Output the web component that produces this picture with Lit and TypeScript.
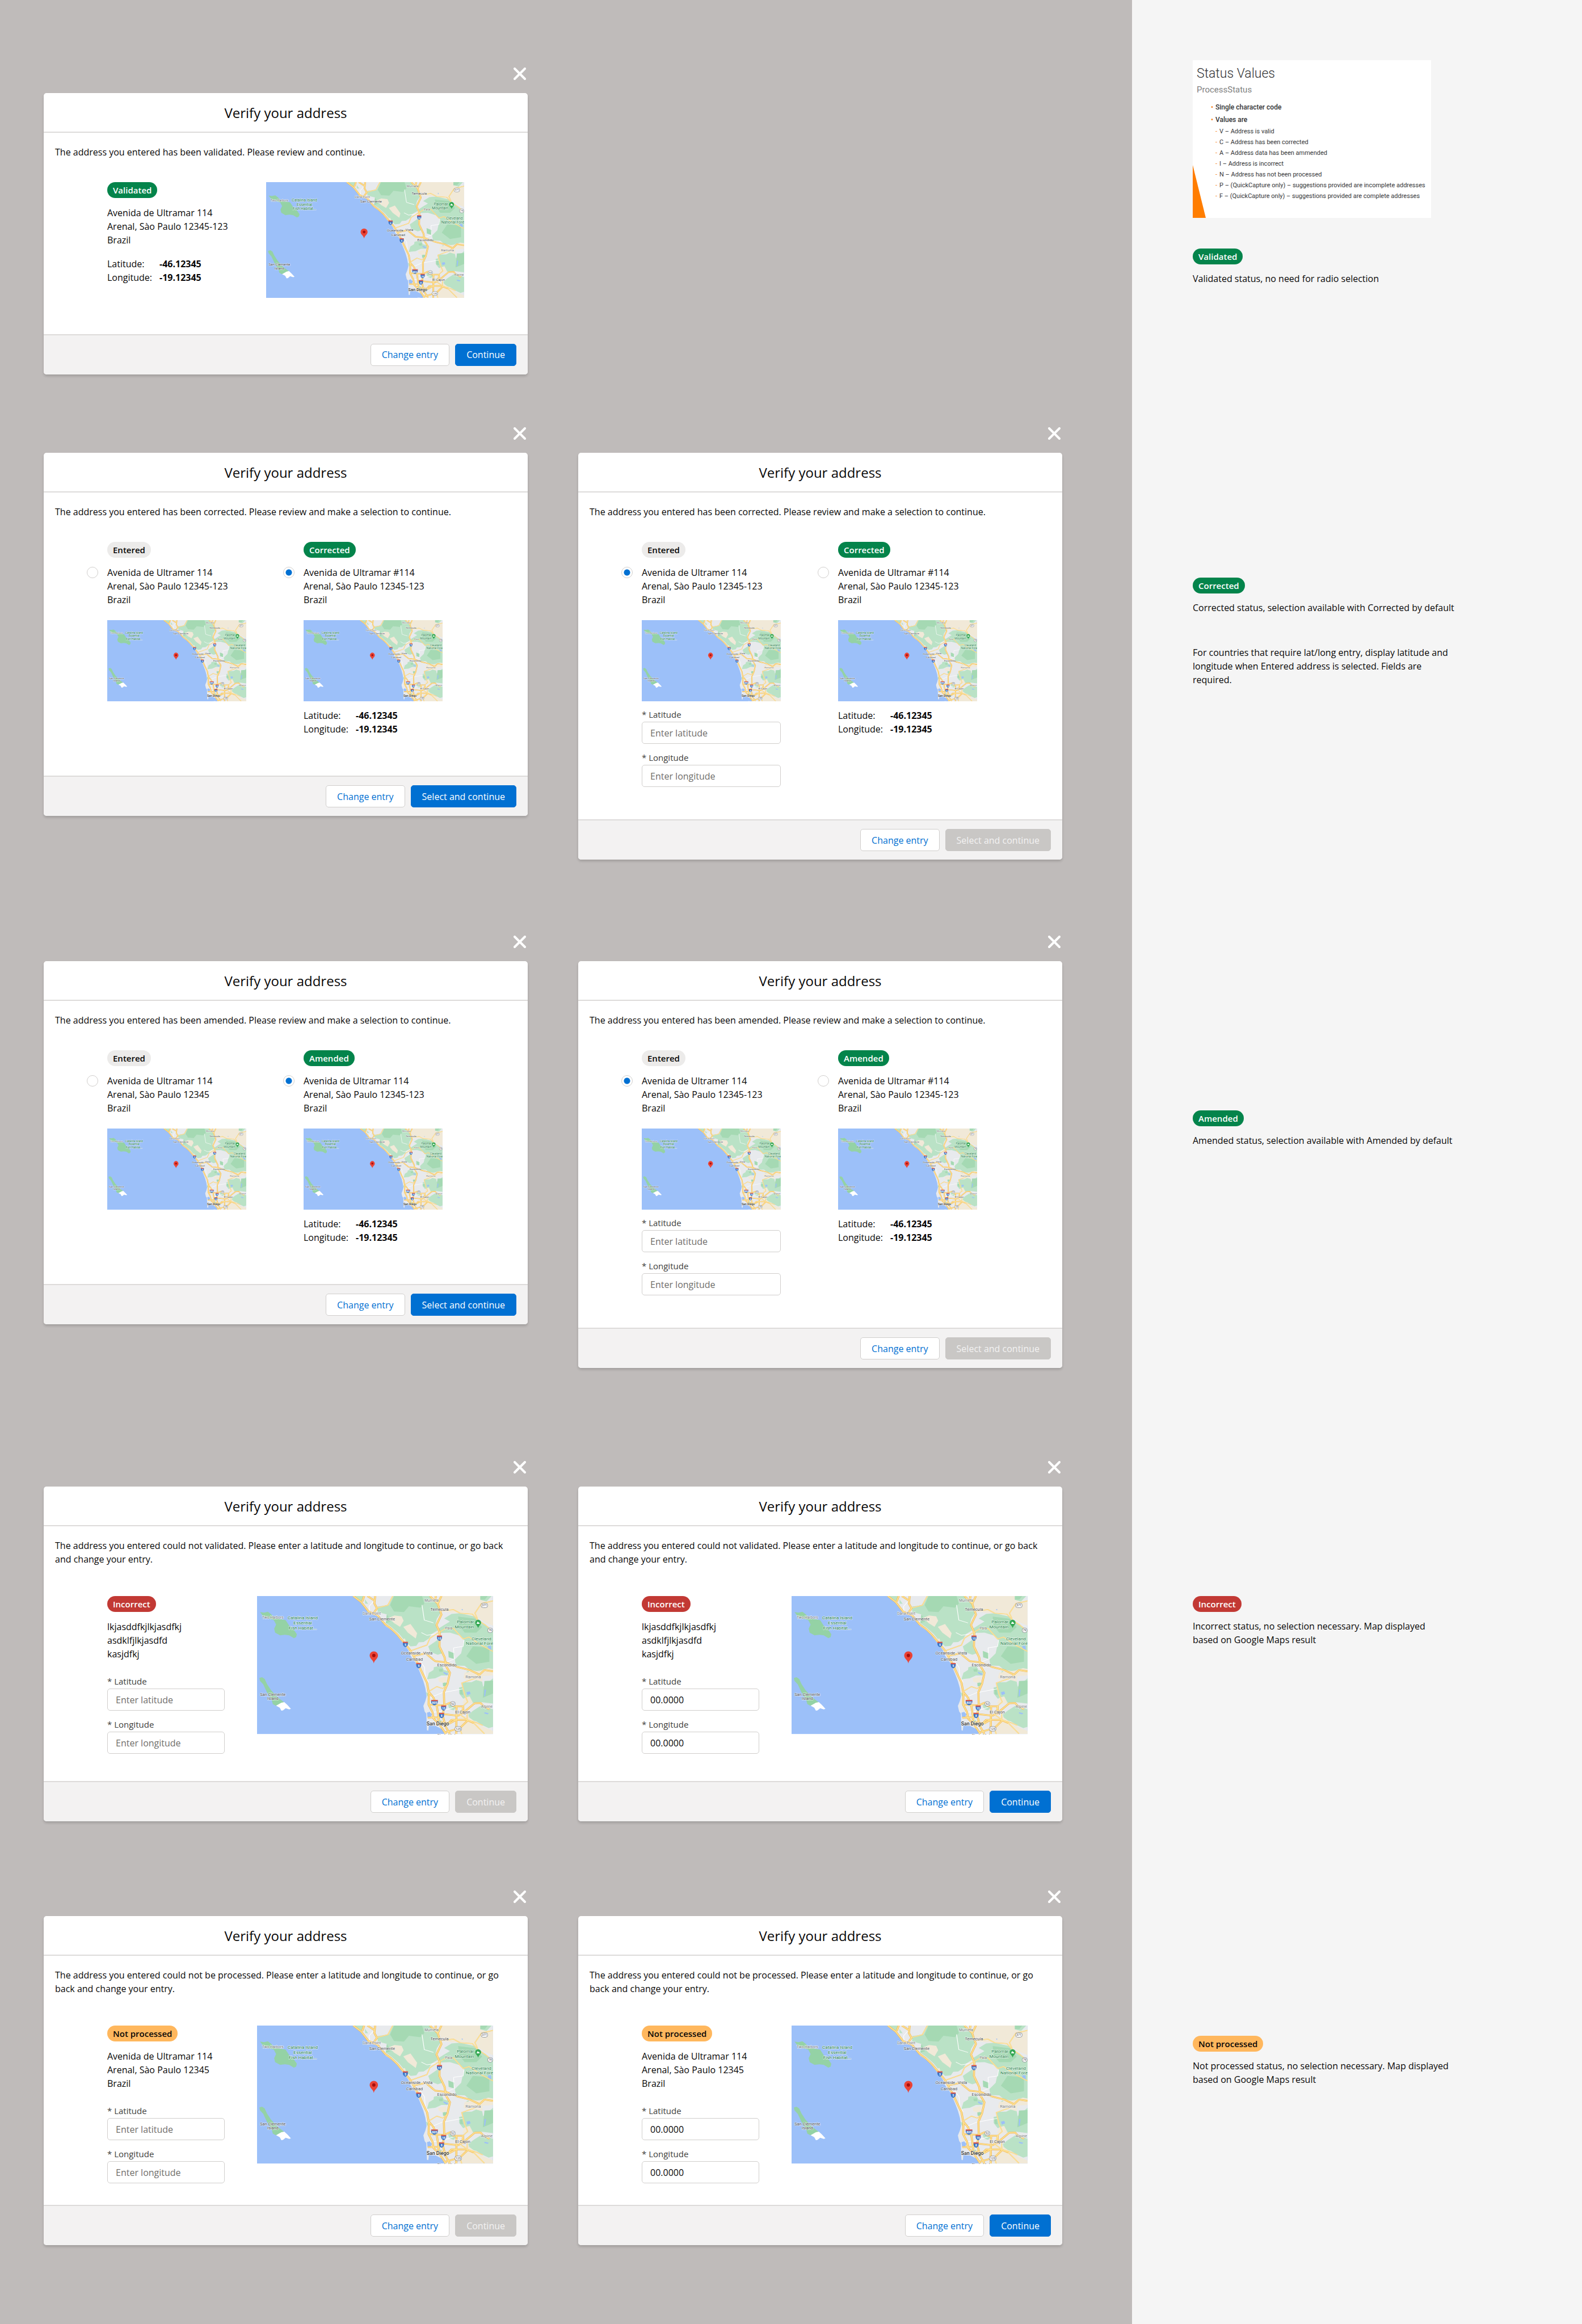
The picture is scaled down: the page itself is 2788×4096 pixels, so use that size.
import { LitElement, html, svg, css, nothing } from "lit";
import { customElement, property } from "lit/decorators.js";
import { classMap } from "lit/directives/class-map.js";

type Tone = "green" | "gray" | "red" | "orange";

interface Choice {
  tone: Tone;
  badge: string;
  lines: string[];
  checked?: boolean;
  coords?: boolean;
  fields?: boolean;
}

interface DialogData {
  message: string;
  layout: "summary" | "choices" | "entry";
  choices: Choice[];
  action: string;
  disabled?: boolean;
  value?: string;
  space: string;
}

interface RowData {
  id: string;
  dialogs: DialogData[];
  tone: Tone;
  badge: string;
  notes: string[];
  slide?: boolean;
}

const MAP_SANS = "Roboto, 'Liberation Sans', sans-serif";

/* Map geometry lives on a 1436 x 996 survey grid that starts at 66,66. */
const GREENS = [
  "M655,66 L718,66 712,98 694,104 672,88Z",
  "M722,90 735,110 742,122 724,120Z",
  "M800,66 L1118,66 1165,130 1182,190 1160,230 1152,270 1164,315 1128,340 1112,372 1080,398 1050,400 1035,425 1000,430 962,385 930,338 884,290 850,262 856,198 800,182 800,142 868,132 895,66Z",
  "M1205,228 L1250,195 1300,190 1392,215 1440,262 1502,312 1502,598 1448,592 1420,612 1356,596 1330,570 1276,568 1270,525 1308,480 1326,384 1300,352 1240,330 1182,332 1172,300 1205,275 1240,250Z",
  "M1108,430 L1168,380 1172,440 1192,480 1166,490 1120,470Z",
  "M1100,668 L1112,620 1140,600 1142,580 1190,566 1202,600 1232,610 1228,640 1188,640 1150,660 1118,664Z",
  "M1312,690 L1372,688 1400,672 1436,684 1442,720 1502,660 1502,842 1430,832 1370,838 1348,800 1320,806 1296,770 1296,726 1316,722Z",
  "M1385,890 L1440,850 1502,884 1502,1010 1476,1020 1440,1000 1400,970 1360,960 1352,920Z",
  "M1228,850 L1262,842 1278,870 1262,892 1236,880Z",
  "M1164,962 L1188,962 1192,998 1172,990Z",
  "M1094,760 L1110,770 1108,796 1098,780Z",
  "M1424,66 L1494,66 1462,106 1424,94Z",
  "M1340,615 1352,606 1356,620 1340,630Z",
];
const DEEP_GREENS = [
  "M900,66 L1070,66 1084,120 1060,150 990,140 960,182 900,178 876,132Z",
  "M1290,215 L1396,230 1436,290 1400,330 1330,330 1296,280Z",
  "M1380,430 L1480,440 1480,540 1400,556 1340,500Z",
  "M1230,462 L1268,480 1264,520 1232,508Z",
  "M1172,594 L1196,590 1196,612 1176,612Z",
  "M1196,690 L1220,692 1216,722 1198,716Z",
  "M1300,735 L1312,730 1320,780 1302,776Z",
  "M1450,680 L1502,676 1502,770 1440,800Z",
  "M1424,66 L1470,66 1452,92 1424,92Z",
  "M856,198 L880,250 850,262Z",
];
const SANDS = [
  "M1190,66 L1424,66 1424,94 1462,106 1502,100 1502,280 1448,252 1398,212 1300,188 1250,186 1196,178 1172,118Z",
  "M868,224 L902,206 946,212 958,244 936,288 900,262Z",
  "M956,288 L1000,268 1040,334 1032,372 984,330Z",
  "M1330,618 L1430,604 1474,586 1502,592 1502,640 1440,644 1436,684 1400,672 1340,672 1322,656Z",
  "M1168,660 L1216,648 1222,680 1200,694 1172,684Z",
  "M1330,800 L1360,790 1380,836 1346,846 1316,842Z",
  "M1300,930 L1352,938 1400,980 1440,1010 1502,1040 1502,1062 1300,1062Z",
  "M940,384 L966,372 976,410 960,400Z",
];
const LAKES = [
  "M1470,424 L1490,426 1492,456 1474,452Z",
  "M1340,760 L1360,754 1366,772 1346,782Z",
  "M1200,612 L1230,628 1220,636 1202,624Z",
  "M1310,160 L1318,160 1316,172Z",
  "M1450,740 1460,742 1454,790 1448,790Z",
  "M1450,905 1476,912 1470,920 1450,914Z",
];
const ROADS = [
  "M652,66 L700,110 745,178 800,206 845,270 882,302 920,345 960,402 995,452 1020,502 1045,555 1075,630 1100,690 1112,770 1110,850 1134,905 1140,950 1180,1000 1215,1062",
  "M1118,66 L1165,120 1188,200 1158,275 1178,330 1176,430 1208,510 1215,570 1240,620 1225,700 1203,760 1205,850 1196,930 1214,1010 1240,1062",
  "M1188,66 L1166,120",
  "M1154,66 L1152,92 1166,120",
  "M1020,498 L1092,480 1150,536 1215,545 1290,580 1360,600 1420,634 1450,600 1502,610",
  "M1112,760 L1140,800 1160,860 1172,950 1160,1000",
  "M1105,944 L1170,942 1200,918 1290,930 1340,890 1390,840 1426,838 1440,856 1480,884",
  "M1112,850 L1205,856 1240,836 1262,862 1320,862 1322,920",
  "M1280,862 L1278,1062",
  "M1214,1005 L1250,960 1340,960 1384,982",
  "M1180,975 L1240,985 1280,958",
  "M1210,1050 L1300,1020 1350,962",
  "M785,66 L780,120 796,155 770,196",
  "M738,66 L780,98",
  "M718,66 L706,106",
];
const BYWAYS = [
  "M1000,462 L1100,420 1118,370 1160,338 1215,300 1262,300 1320,376 1356,362 1430,420 1502,466",
  "M1188,174 L1262,164 1302,190 1376,196 1410,240 1456,276 1500,320",
  "M1408,230 L1392,190 1430,122 1502,100",
  "M796,152 L862,132 892,66",
  "M1420,634 L1384,664 1312,694 1330,780 1348,830 1318,862",
  "M1112,754 L1160,720 1196,734 1226,704",
  "M1322,862 L1300,920 1345,960 1345,900",
  "M1384,982 L1450,1060",
  "M1300,1020 L1312,1062",
  "M1440,1000 1400,980 1345,960",
];
const LANES = [
  "M1060,540 L1085,580 1090,650 1110,690",
  "M1208,760 L1320,736",
  "M1120,800 L1200,760",
  "M1262,440 L1320,430 1326,384",
  "M1262,440 L1266,520 1215,545",
  "M780,98 L748,140 750,180",
  "M1120,906 L1180,900 1262,870",
  "M1070,130 L1084,240 1140,260",
  "M1066,330 L1100,350 1160,338",
];

interface Label {
  t: string;
  x: number;
  y: number;
  s: number;
  c: string;
  a?: string;
}
const DARK = "#4a4d51";
const SOFT = "#777b80";
const PARK = "#1e8148";
const LABELS: Label[] = [
  { t: "Two Harbors", x: 161, y: 218, s: 9, c: SOFT },
  { t: "Catalina Island", x: 345, y: 223, s: 11, c: PARK },
  { t: "Essential", x: 345, y: 259, s: 11, c: PARK },
  { t: "Fish Habitat...", x: 345, y: 295, s: 11, c: PARK },
  { t: "San Clemente", x: 161, y: 774, s: 10, c: DARK },
  { t: "Island", x: 161, y: 805, s: 10, c: DARK },
  { t: "Dana Point", x: 763, y: 189, s: 9, c: SOFT },
  { t: "San Clemente", x: 828, y: 231, s: 10, c: DARK },
  { t: "Murrieta", x: 1127, y: 97, s: 9, c: SOFT },
  { t: "Temecula", x: 1177, y: 160, s: 10, c: DARK },
  { t: "Pala", x: 1231, y: 298, s: 9, c: SOFT },
  { t: "Palomar", x: 1386, y: 251, s: 11, c: PARK, a: "end" },
  { t: "Mountain", x: 1386, y: 287, s: 11, c: PARK, a: "end" },
  { t: "Cleveland", x: 1431, y: 374, s: 11, c: PARK },
  { t: "National Fore", x: 1502, y: 409, s: 11, c: PARK, a: "end" },
  { t: "Oceanside", x: 1003, y: 478, s: 10, c: DARK },
  { t: "Vista", x: 1106, y: 474, s: 10, c: DARK },
  { t: "Carlsbad", x: 1025, y: 518, s: 10, c: DARK },
  { t: "Escondido", x: 1223, y: 560, s: 10, c: DARK },
  { t: "Ramona", x: 1381, y: 647, s: 10, c: SOFT },
  { t: "Alpine", x: 1465, y: 862, s: 10, c: SOFT },
  { t: "El Cajon", x: 1317, y: 904, s: 10, c: DARK },
  { t: "San Diego", x: 1167, y: 989, s: 12, c: "#2f3134" },
  { t: "Chula Vista", x: 1225, y: 1068, s: 10, c: DARK },
];
const INTERSTATES = [
  { t: "5", x: 968, y: 413 },
  { t: "15", x: 1176, y: 370 },
  { t: "5", x: 1051, y: 567 },
  { t: "805", x: 1147, y: 835 },
  { t: "15", x: 1201, y: 873 },
  { t: "8", x: 1188, y: 927 },
];
const STATE_ROUTES = [
  { t: "371", x: 1449, y: 133 },
  { t: "79", x: 1484, y: 312 },
  { t: "52", x: 1258, y: 843 },
  { t: "125", x: 1289, y: 1024 },
];

const mapX = (x: number) => Math.round((x - 66) * 0.3954);
const mapY = (y: number) => Math.round((y - 66) / 3);

@customElement("coast-map")
export class CoastMap extends LitElement {
  static styles = css`
    :host {
      display: block;
    }
    .map {
      display: block;
      width: 100%;
      height: auto;
    }
    .halo {
      paint-order: stroke;
      stroke: rgba(255, 255, 255, 0.7);
      stroke-width: 2px;
      stroke-linejoin: round;
    }
  `;

  render() {
    return html`
      <svg class="map" viewBox="0 0 568 332" role="img" aria-label="Map of the coast" font-family=${MAP_SANS}>
        <rect width="568" height="332" fill="#9cc0f9"></rect>
        <g transform="scale(0.3954 0.3333) translate(-66 -66)">
          <path
            fill="#e8eaed"
            d="M648,66 L690,105 720,145 745,190 795,210 830,250 850,285 900,325 940,385 968,425 986,455 1002,500 1030,545 1048,590 1062,630 1078,680 1090,730 1098,790 1090,825 1078,860 1086,900 1096,915 1100,1035 1108,1038 1112,1000 1150,1006 1176,1040 1200,1062 L1502,1062 1502,66Z"
          ></path>
          ${GREENS.map((d) => svg`<path d=${d} fill="#bae2c6"></path>`)}
          ${DEEP_GREENS.map((d) => svg`<path d=${d} fill="#a5d9b3"></path>`)}
          ${SANDS.map((d) => svg`<path d=${d} fill="#f1e9d8"></path>`)}
          ${LAKES.map((d) => svg`<path d=${d} fill="#9cc0f9"></path>`)}
          <path fill="#9cc0f9" d="M1100,908 L1118,902 1130,920 1124,938 1104,946Z M1118,1004 L1150,1002 1196,1030 1206,1062 1176,1062 1150,1020Z"></path>
          <path fill="#94d2a5" d="M84,182 L108,186 132,180 150,196 176,226 240,240 262,280 292,314 308,342 304,362 290,370 262,350 236,346 206,350 176,330 170,302 182,272 168,240 136,228 104,212Z"></path>
          <path fill="#94d2a5" d="M80,658 L96,652 112,664 126,700 150,744 186,792 232,834 180,858 162,846 156,820 126,760 104,704 84,678Z"></path>
          <path fill="#ffffff" d="M182,858 L214,836 232,832 250,852 272,880 262,884 240,876 224,892 214,894 204,872Z"></path>
          ${LANES.map((d) => svg`<path d=${d} fill="none" stroke="#ffffff" stroke-width="4"></path>`)}
          ${BYWAYS.map((d) => svg`<path d=${d} fill="none" stroke="#f6cf7c" stroke-width="7" stroke-linejoin="round"></path>`)}
          ${ROADS.map((d) => svg`<path d=${d} fill="none" stroke="#f3b44c" stroke-width="12" stroke-linejoin="round"></path>`)}
          ${ROADS.map((d) => svg`<path d=${d} fill="none" stroke="#fde293" stroke-width="7" stroke-linejoin="round"></path>`)}
          ${BYWAYS.map((d) => svg`<path d=${d} fill="none" stroke="#fde59d" stroke-width="4" stroke-linejoin="round"></path>`)}
        </g>
        ${INTERSTATES.map((r) => {
          const w = r.t.length > 2 ? 8 : 6;
          return svg`<g transform="translate(${mapX(r.x)} ${mapY(r.y)})">
            <path d="M${-w},-4 Q${-w - 1},5 0,7 Q${w + 1},5 ${w},-4Z" fill="#3a73c4"></path>
            <path d="M${-w},-3 L${-w},-6 ${w},-6 ${w},-3Z" fill="#d8574e"></path>
            <text y="4" font-size="7" font-weight="700" text-anchor="middle" fill="#ffffff">${r.t}</text>
          </g>`;
        })}
        ${STATE_ROUTES.map((r) => {
          const w = r.t.length > 2 ? 8 : 6;
          return svg`<g transform="translate(${mapX(r.x)} ${mapY(r.y)})">
            <rect x=${-w} y="-5" width=${w * 2} height="11" rx="5" fill="#ffffff" stroke="#70757a"></rect>
            <text y="3" font-size="7" font-weight="500" text-anchor="middle" fill="#5f6368">${r.t}</text>
          </g>`;
        })}
        ${LABELS.map(
          (l) => svg`<text class="halo" x=${mapX(l.x)} y=${mapY(l.y) + 4} font-size=${l.s} font-weight=${l.s > 11 ? 500 : 400} text-anchor=${l.a ?? "middle"} fill=${l.c}>${l.t}</text>`
        )}
        <g transform="translate(${mapX(1412)} ${mapY(258)})">
          <path d="M0,13 C-2,7 -7,5 -7,0 A7,7 0 1 1 7,0 C7,5 2,7 0,13Z" fill="#34a853"></path>
          <path d="M-4,3 L-1,-3 1,0 2,-1 4,3Z" fill="#ffffff"></path>
        </g>
        <g transform="translate(${mapX(776)} ${mapY(496)})">
          <path d="M0,19 C-1,11 -10,8 -10,0 A10,10 0 1 1 10,0 C10,8 1,11 0,19Z" fill="#ea4335"></path>
          <circle r="4" fill="#a50e0e"></circle>
        </g>
      </svg>
    `;
  }
}

@customElement("status-badge")
export class StatusBadge extends LitElement {
  @property() tone: Tone = "gray";
  static styles = css`
    :host {
      display: flex;
    }
    .badge {
      border-radius: 14px;
      padding: 0 10px;
      font-size: 15px;
      line-height: 28px;
      font-weight: 600;
      color: #ffffff;
    }
    .green {
      background: #04844b;
    }
    .red {
      background: #c23934;
    }
    .gray {
      background: #ecebea;
      color: #080707;
    }
    .orange {
      background: #ffb75d;
      color: #080707;
    }
  `;
  render() {
    return html`<span class=${classMap({ badge: true, [this.tone]: true })}><slot></slot></span>`;
  }
}

@customElement("address-dialog")
export class AddressDialog extends LitElement {
  @property({ attribute: false }) data!: DialogData;

  static styles = css`
    :host {
      display: flex;
      flex-direction: column;
      align-items: stretch;
    }
    .close {
      align-self: flex-end;
      width: 28px;
      height: 28px;
      margin-bottom: 20px;
      padding: 0;
      border: 0;
      background: none;
      display: grid;
      place-items: center;
      cursor: pointer;
    }
    .dialog {
      background: #ffffff;
      border-radius: 5px;
      box-shadow: 0 3px 4px rgba(0, 0, 0, 0.16);
      overflow: hidden;
    }
    .title {
      margin: 0;
      padding: 17px 20px 15px;
      border-bottom: 2px solid #dddbda;
      font-size: 24px;
      line-height: 36px;
      font-weight: 400;
      text-align: center;
    }
    .message {
      margin: 0;
      padding: 22px 20px 0;
    }
    .summary {
      display: grid;
      grid-template-columns: 280px 1fr;
      padding: 41px 112px 0;
    }
    .entry {
      display: grid;
      grid-template-columns: 264px 1fr;
      padding: 53px 61px 0 112px;
    }
    .choices {
      display: grid;
      grid-template-columns: 1fr 1fr;
      column-gap: 65px;
      padding: 41px 150px 0 76px;
    }
    .choice {
      display: grid;
      grid-template-columns: 20px 1fr;
      column-gap: 16px;
      align-content: start;
    }
    .choice-badge,
    .choice-more {
      grid-column: 2;
    }
    .radio {
      appearance: none;
      box-sizing: border-box;
      width: 20px;
      height: 20px;
      margin: 16px 0 0;
      border: 1px solid #d0cecc;
      border-radius: 50%;
      background: #ffffff;
    }
    .radio:checked {
      background: radial-gradient(circle, #0070d2 5px, #ffffff 6px);
    }
    .address {
      display: block;
      margin-top: 14px;
    }
    .line {
      display: block;
    }
    .thumb {
      margin-top: 24px;
    }
    .coords {
      display: grid;
      grid-template-columns: 92px 1fr;
      margin: 18px 0 0;
    }
    .coords dd {
      margin: 0;
      font-weight: 700;
    }
    .choice .coords,
    .choice .fields {
      margin-top: 13px;
    }
    .fields {
      display: grid;
      row-gap: 14px;
      margin-top: 26px;
    }
    .entry .fields {
      width: 207px;
    }
    .field {
      display: grid;
      row-gap: 3px;
    }
    .label {
      font-size: 15px;
      line-height: 20px;
      color: #3e3e3c;
    }
    .input {
      box-sizing: border-box;
      width: 100%;
      height: 39px;
      padding: 0 14px;
      border: 1px solid #d0cecc;
      border-radius: 5px;
      background: #ffffff;
      font: inherit;
      color: #080707;
    }
    .input::placeholder {
      color: #706e6b;
      opacity: 1;
    }
    .space-xl {
      padding-bottom: 70px;
    }
    .space-l {
      padding-bottom: 64px;
    }
    .space-m {
      padding-bottom: 57px;
    }
    .space-s {
      padding-bottom: 48px;
    }
    .space-xs {
      padding-bottom: 38px;
    }
    .footer {
      display: flex;
      justify-content: flex-end;
      gap: 10px;
      padding: 15px 20px;
      border-top: 2px solid #dddbda;
      background: #f3f2f2;
    }
    .button {
      box-sizing: border-box;
      height: 39px;
      padding: 0 19px;
      border: 1px solid #d0cecc;
      border-radius: 5px;
      background: #ffffff;
      font: inherit;
      color: #0070d2;
      cursor: pointer;
    }
    .brand {
      border-color: #0070d2;
      background: #0070d2;
      color: #ffffff;
    }
    .brand:disabled {
      border-color: #c9c7c5;
      background: #c9c7c5;
      color: #f3f2f2;
      cursor: default;
    }
  `;

  private address(lines: string[]) {
    return lines.map((l) => html`<span class="line">${l}</span>`);
  }

  private coords() {
    return html`<dl class="coords">
      <dt>Latitude:</dt>
      <dd>-46.12345</dd>
      <dt>Longitude:</dt>
      <dd>-19.12345</dd>
    </dl>`;
  }

  private fields() {
    return html`<div class="fields">
      ${["Latitude", "Longitude"].map(
        (name) => html`<div class="field">
          <label class="label" for=${name}>* ${name}</label>
          <input
            class="input"
            id=${name}
            type="text"
            required
            placeholder="Enter ${name.toLowerCase()}"
            .value=${this.data.value ?? ""}
          />
        </div>`
      )}
    </div>`;
  }

  private single(c: Choice) {
    return html`
      <div class="details">
        <status-badge tone=${c.tone}>${c.badge}</status-badge>
        <div class="address">${this.address(c.lines)}</div>
        ${c.coords ? this.coords() : nothing} ${c.fields ? this.fields() : nothing}
      </div>
      <coast-map></coast-map>
    `;
  }

  private choice(c: Choice, i: number) {
    return html`<div class="choice">
      <status-badge class="choice-badge" tone=${c.tone}>${c.badge}</status-badge>
      <input class="radio" type="radio" name="address" id="choice-${i}" ?checked=${c.checked} />
      <label class="address" for="choice-${i}">${this.address(c.lines)}</label>
      <div class="choice-more">
        <coast-map class="thumb"></coast-map>
        ${c.coords ? this.coords() : nothing} ${c.fields ? this.fields() : nothing}
      </div>
    </div>`;
  }

  render() {
    const d = this.data;
    return html`
      <button class="close" type="button" aria-label="Close">
        <svg width="22" height="22" viewBox="0 0 22 22" aria-hidden="true">
          <path d="M2 2L20 20M20 2L2 20" stroke="#ffffff" stroke-width="4" stroke-linecap="round"></path>
        </svg>
      </button>
      <section class="dialog" aria-labelledby="title">
        <h2 class="title" id="title">Verify your address</h2>
        <p class="message">${d.message}</p>
        <div class=${classMap({ [d.layout]: true, ["space-" + d.space]: true })}>
          ${d.layout === "choices" ? d.choices.map((c, i) => this.choice(c, i)) : this.single(d.choices[0])}
        </div>
        <footer class="footer">
          <button class="button" type="button">Change entry</button>
          <button class="button brand" type="button" ?disabled=${d.disabled}>${d.action}</button>
        </footer>
      </section>
    `;
  }
}

const STATUS_VALUES = [
  "V – Address is valid",
  "C – Address has been corrected",
  "A – Address data has been ammended",
  "I – Address is incorrect",
  "N – Address has not been processed",
  "P – (QuickCapture only) – suggestions provided are incomplete addresses",
  "F – (QuickCapture only) – suggestions provided are complete addresses",
];

@customElement("status-slide")
export class StatusSlide extends LitElement {
  static styles = css`
    :host {
      display: block;
      font-family: Roboto, "Liberation Sans", sans-serif;
      color: #333436;
    }
    .slide {
      position: relative;
      box-sizing: border-box;
      width: 420px;
      min-height: 278px;
      padding: 10px 7px;
      background: #ffffff;
    }
    .heading {
      margin: 0;
      font-size: 23px;
      line-height: 28px;
      font-weight: 300;
    }
    .sub {
      margin: 4px 0 10px;
      font-size: 15px;
      line-height: 20px;
      color: #7f7f7f;
    }
    .list,
    .values {
      margin: 0;
      padding: 0;
      list-style: none;
    }
    .list {
      padding-left: 25px;
      font-size: 12px;
      line-height: 22px;
      font-weight: 500;
    }
    .item {
      display: grid;
      grid-template-columns: 8px 1fr;
    }
    .item::before {
      content: "•";
      color: #f58220;
    }
    .values {
      grid-column: 2;
      font-size: 11px;
      line-height: 19px;
      font-weight: 400;
    }
    .value {
      display: grid;
      grid-template-columns: 7px 1fr;
      white-space: nowrap;
    }
    .value::before {
      content: "-";
      color: #f58220;
    }
    .wedge {
      position: absolute;
      left: 0;
      bottom: 0;
    }
  `;
  render() {
    return html`<article class="slide">
      <h3 class="heading">Status Values</h3>
      <p class="sub">ProcessStatus</p>
      <ul class="list">
        <li class="item">Single character code</li>
        <li class="item">
          Values are
          <ul class="values">
            ${STATUS_VALUES.map((v) => html`<li class="value">${v}</li>`)}
          </ul>
        </li>
      </ul>
      <svg class="wedge" width="23" height="93" viewBox="0 0 23 93" aria-hidden="true">
        <path d="M0 0L23 93H0Z" fill="#ff7d00"></path>
      </svg>
    </article>`;
  }
}

const FULL = "Arenal, Sào Paulo 12345-123";
const SHORT = "Arenal, Sào Paulo 12345";
const AMAR = "Avenida de Ultramar 114";
const AMER = "Avenida de Ultramer 114";
const AMAR_NO = "Avenida de Ultramar #114";

const pair = (badge: string, entered: string[], fixed: string[], pickEntered: boolean): Choice[] => [
  { tone: "gray", badge: "Entered", lines: entered, checked: pickEntered, fields: pickEntered },
  { tone: "green", badge, lines: fixed, checked: !pickEntered, coords: true },
];

const reviewMessage = (what: string) =>
  `The address you entered has been ${what}. Please review and make a selection to continue.`;

const entryPair = (message: string, choice: Choice, space: string): DialogData[] => [
  { message, layout: "entry", choices: [choice], action: "Continue", disabled: true, space },
  { message, layout: "entry", choices: [choice], action: "Continue", value: "00.0000", space },
];

const ROWS: RowData[] = [
  {
    id: "validated",
    tone: "green",
    badge: "Validated",
    slide: true,
    notes: ["Validated status, no need for radio selection"],
    dialogs: [
      {
        message: "The address you entered has been validated. Please review and continue.",
        layout: "summary",
        choices: [{ tone: "green", badge: "Validated", lines: [AMAR, FULL, "Brazil"], coords: true }],
        action: "Continue",
        space: "l",
      },
    ],
  },
  {
    id: "corrected",
    tone: "green",
    badge: "Corrected",
    notes: [
      "Corrected status, selection available with Corrected by default",
      "For countries that require lat/long entry, display latitude and longitude when Entered address is selected. Fields are required.",
    ],
    dialogs: [
      {
        message: reviewMessage("corrected"),
        layout: "choices",
        choices: pair("Corrected", [AMER, FULL, "Brazil"], [AMAR_NO, FULL, "Brazil"], false),
        action: "Select and continue",
        space: "xl",
      },
      {
        message: reviewMessage("corrected"),
        layout: "choices",
        choices: pair("Corrected", [AMER, FULL, "Brazil"], [AMAR_NO, FULL, "Brazil"], true),
        action: "Select and continue",
        disabled: true,
        space: "m",
      },
    ],
  },
  {
    id: "amended",
    tone: "green",
    badge: "Amended",
    notes: ["Amended status, selection available with Amended by default"],
    dialogs: [
      {
        message: reviewMessage("amended"),
        layout: "choices",
        choices: pair("Amended", [AMAR, SHORT, "Brazil"], [AMAR, FULL, "Brazil"], false),
        action: "Select and continue",
        space: "xl",
      },
      {
        message: reviewMessage("amended"),
        layout: "choices",
        choices: pair("Amended", [AMER, FULL, "Brazil"], [AMAR_NO, FULL, "Brazil"], true),
        action: "Select and continue",
        disabled: true,
        space: "m",
      },
    ],
  },
  {
    id: "incorrect",
    tone: "red",
    badge: "Incorrect",
    notes: ["Incorrect status, no selection necessary. Map displayed\nbased on Google Maps result"],
    dialogs: entryPair(
      "The address you entered could not validated. Please enter a latitude and longitude to continue, or go back and change your entry.",
      { tone: "red", badge: "Incorrect", lines: ["lkjasddfkjlkjasdfkj", "asdklfjlkjasdfd", "kasjdfkj"], fields: true },
      "s"
    ),
  },
  {
    id: "unprocessed",
    tone: "orange",
    badge: "Not processed",
    notes: ["Not processed status, no selection necessary. Map displayed\nbased on Google Maps result"],
    dialogs: entryPair(
      "The address you entered could not be processed. Please enter a latitude and longitude to continue, or go back and change your entry.",
      { tone: "orange", badge: "Not processed", lines: [AMAR, SHORT, "Brazil"], fields: true },
      "xs"
    ),
  },
];

@customElement("app-root")
export class AppRoot extends LitElement {
  static styles = css`
    :host {
      display: flex;
      flex-direction: column;
      min-height: 100vh;
      font-family: "Open Sans", "Noto Sans", sans-serif;
      font-size: 16px;
      line-height: 24px;
      color: #080707;
      background: #f5f5f5;
    }
    .row {
      display: grid;
      grid-template-columns: 1995fr 793fr;
    }
    .row:last-child {
      flex: 1;
    }
    .canvas {
      display: grid;
      grid-template-columns: 1fr 1fr;
      column-gap: 89px;
      align-items: start;
      padding: 52px 123px 0 77px;
      background: #bfbbba;
    }
    .note {
      display: flex;
      flex-direction: column;
      align-items: flex-start;
      padding-left: 107px;
    }
    .note-text {
      width: 464px;
      margin: 13px 0 0;
      white-space: pre-line;
    }
    .note-text + .note-text {
      margin-top: 55px;
    }
    .slide {
      margin-bottom: 54px;
    }
    .validated .canvas {
      padding-top: 116px;
      padding-bottom: 38px;
    }
    .validated .note {
      padding-top: 106px;
    }
    .corrected .canvas {
      padding-bottom: 79px;
    }
    .corrected .note {
      padding-top: 320px;
    }
    .amended .canvas {
      padding-bottom: 109px;
    }
    .amended .note {
      padding-top: 363px;
    }
    .incorrect .canvas {
      padding-bottom: 67px;
    }
    .incorrect .note {
      padding-top: 293px;
    }
    .unprocessed .note {
      padding-top: 311px;
    }
  `;

  render() {
    return ROWS.map(
      (r) => html`<section class=${classMap({ row: true, [r.id]: true })}>
        <div class="canvas">${r.dialogs.map((d) => html`<address-dialog .data=${d}></address-dialog>`)}</div>
        <aside class="note">
          ${r.slide ? html`<status-slide class="slide"></status-slide>` : nothing}
          <status-badge tone=${r.tone}>${r.badge}</status-badge>
          ${r.notes.map((n) => html`<p class="note-text">${n}</p>`)}
        </aside>
      </section>`
    );
  }
}
